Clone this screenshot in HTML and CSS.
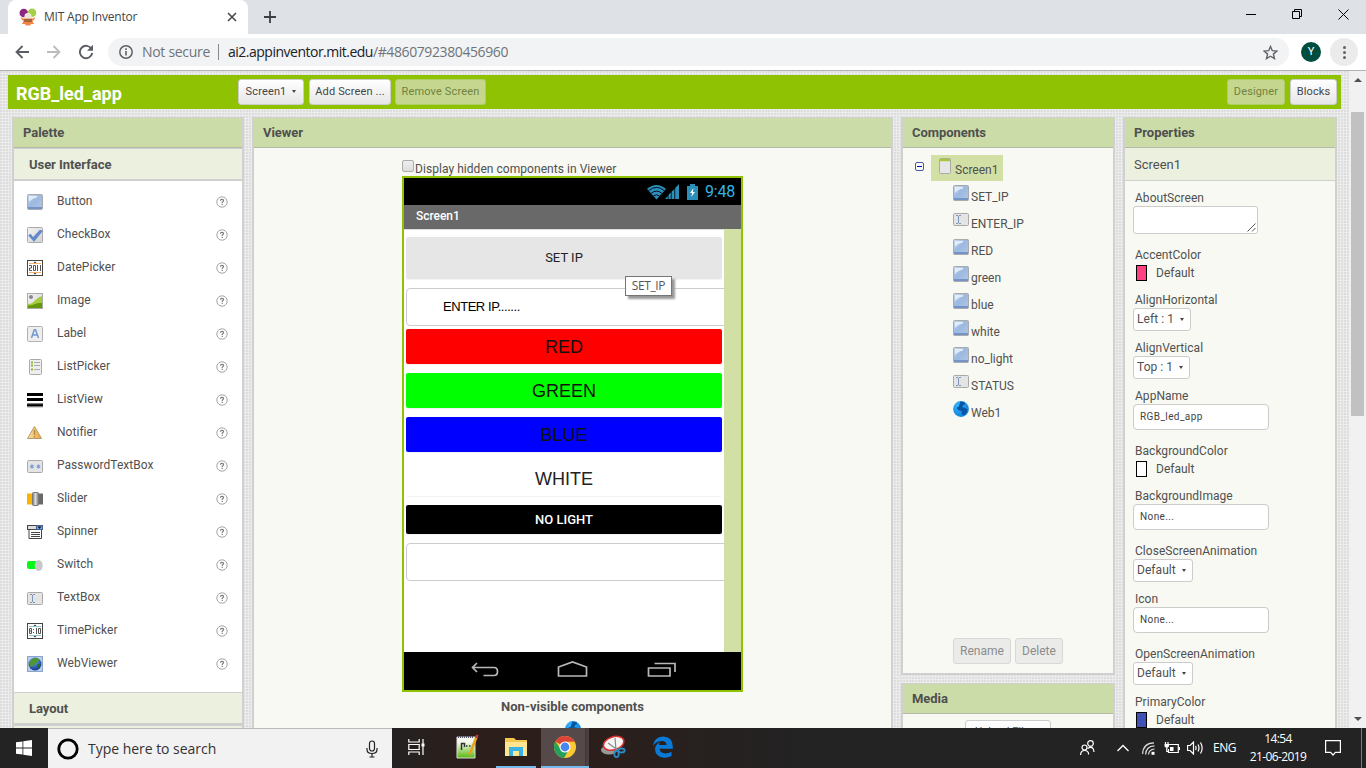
FILE: index.html
```html
<!DOCTYPE html>
<html lang="en">
<head>
<meta charset="utf-8">
<title>MIT App Inventor</title>
<link rel="stylesheet" href="styles.css">
</head>
<body>
<svg class="defs" width="0" height="0" aria-hidden="true">
  <defs>
    <linearGradient id="blueFill" x1="0" y1="0" x2="1" y2="1"><stop offset="0" stop-color="#c9dbf0"/><stop offset=".45" stop-color="#9db9e0"/><stop offset="1" stop-color="#b0c6e6"/></linearGradient>
    <linearGradient id="greyFill" x1="0" y1="0" x2="1" y2="1"><stop offset="0" stop-color="#f4f4f4"/><stop offset="1" stop-color="#d2d2d2"/></linearGradient>
    <linearGradient id="knob"><stop offset="0" stop-color="#777"/><stop offset=".5" stop-color="#ddd"/><stop offset="1" stop-color="#777"/></linearGradient>
    <linearGradient id="warn"><stop offset="0" stop-color="#fce3a8"/><stop offset="1" stop-color="#f0a030"/></linearGradient>
    <radialGradient id="globe" cx=".35" cy=".3" r=".8"><stop offset="0" stop-color="#35b6ff"/><stop offset="1" stop-color="#0879d8"/></radialGradient>
    <radialGradient id="earth" cx=".4" cy=".25" r=".8"><stop offset="0" stop-color="#7ab0ff"/><stop offset="1" stop-color="#0b2f86"/></radialGradient>
    <linearGradient id="page" x1="0" y1="0" x2="0" y2="1"><stop offset=".25" stop-color="#f5f8ee"/><stop offset="1" stop-color="#57b90c"/></linearGradient>
  </defs>
  <symbol id="i-button" viewBox="0 0 16 16"><rect x=".5" y=".5" width="15" height="15" rx="1" fill="url(#blueFill)" stroke="#aaa"/><path d="M2 2h8v1.500Q5 4 2 8z" fill="#e2ecf8"/><path d="M1 14h14" stroke="#7294c8" stroke-width="2"/></symbol>
  <symbol id="i-check" viewBox="0 0 16 16"><rect x=".5" y=".5" width="15" height="15" rx="1" fill="url(#greyFill)" stroke="#aaa"/><path d="M1.500 8.500l2-1.500 2.500 3.500L13 3l2.500 1L7 14.500z" fill="#6088cc" stroke="#4f76b8" stroke-width=".4"/></symbol>
  <symbol id="i-date" viewBox="0 0 16 16"><rect x=".5" y=".5" width="15" height="15" fill="#fff" stroke="#444"/><path d="M2 3.500h12M2 12.500h12" stroke="#f5b26b"/><path d="M6.500 3L8 1.500 9.500 3zM6.500 13L8 14.500 9.500 13z" fill="#333"/><path d="M2 5.500h2.500v2.500h-2v2.500H5M6.500 5.500h2v5h-2zM10.500 5v6M13.500 5v6" fill="none" stroke="#555"/></symbol>
  <symbol id="i-time" viewBox="0 0 16 16"><rect x=".5" y=".5" width="15" height="15" fill="#fff" stroke="#444"/><path d="M2 3.500h12M2 12.500h12" stroke="#8cc5d0"/><path d="M6.500 3L8 1.500 9.500 3zM6.500 13L8 14.500 9.500 13z" fill="#333"/><path d="M2.500 5.500h2v5h-2zM2.500 8h2M6.500 6v1M6.500 9v1M9.500 5v6M11.500 5.500h2v5h-2z" fill="none" stroke="#555"/></symbol>
  <symbol id="i-image" viewBox="0 0 16 16"><rect x=".5" y=".5" width="15" height="15" fill="url(#greyFill)" stroke="#aaa"/><circle cx="4" cy="4" r="2" fill="#888"/><path d="M1 11q4 0 7-3.500t7-4.500v12H1z" fill="#a6cb3c"/><path d="M1 12.500q4 0 7-1.500t7-1v5H1z" fill="#66960a"/></symbol>
  <symbol id="i-label" viewBox="0 0 16 16"><rect x=".5" y=".5" width="15" height="15" rx="1" fill="#eee" stroke="#b2b2b2"/><path d="M4.500 12L7.300 3.700h1.200L11.500 12M5.800 9h4.500" fill="none" stroke="#7397d1" stroke-width="1.500"/></symbol>
  <symbol id="i-listpicker" viewBox="0 0 16 16"><rect x="2.500" y=".5" width="12" height="15" rx="1" fill="#eee" stroke="#aaa"/><path d="M4 3.500h2M4 6.500h2M4 10.500h2" stroke="#8fb935" stroke-width="2"/><path d="M7 3.500h6M7 6.500h6M7 10.500h6" stroke="#aaa"/></symbol>
  <symbol id="i-listview" viewBox="0 0 16 16"><path d="M0 2.500h16M0 7.500h16M0 13h16" stroke="#000" stroke-width="3"/><path d="M0 12h16M0 15h16" stroke="#777" stroke-width=".6"/></symbol>
  <symbol id="i-notifier" viewBox="0 0 16 16"><path d="M7.500 1.500L14.500 13.500H.5z" fill="url(#warn)" stroke="#b39a70"/><path d="M7.500 5v5M7.500 11v1.500" stroke="#a58350" stroke-width="1.200"/></symbol>
  <symbol id="i-password" viewBox="0 0 16 16"><rect x=".5" y="2.500" width="15" height="12" rx="1" fill="#e4e4e4" stroke="#aaa"/><path d="M5 6.500v4M3.300 7.500l3.400 2M6.700 7.500l-3.400 2M11.500 6.500v4M9.800 7.500l3.400 2M13.200 7.500l-3.400 2" stroke="#7c9ed6" stroke-width="1.300"/></symbol>
  <symbol id="i-slider" viewBox="0 0 16 16"><path d="M0 2.500h6v11H0z" fill="#f8b400"/><path d="M11 2.500h5v11h-5z" fill="#6a6a6a"/><rect x="5.500" y="1.500" width="6" height="13" rx="1" fill="url(#knob)" stroke="#777"/></symbol>
  <symbol id="i-spinner" viewBox="0 0 16 16"><rect x=".5" y="1.500" width="15" height="4" fill="#ddd" stroke="#444"/><rect x="9.500" y="1.500" width="6" height="4" fill="#78a1df" stroke="#416194"/><path d="M10.500 2.500h4L12.500 5z" fill="#111"/><path d="M2 6v8.500h12.500V6M4 8.500h9M4 10.500h9M4 12.500h9" fill="none" stroke="#444"/></symbol>
  <symbol id="i-switch" viewBox="0 0 16 16"><rect x="0" y="4" width="13" height="8" rx="2" fill="#00fa16"/><ellipse cx="11.700" cy="8.500" rx="4" ry="5.500" fill="#c9c9c9"/></symbol>
  <symbol id="i-text" viewBox="0 0 16 16"><rect x=".5" y="2.500" width="15" height="12" rx="1" fill="#e4e4e4" stroke="#aaa"/><path d="M3 4.500h2M6 4.500h2M5.500 5v7M3 12.500h2M6 12.500h2" fill="none" stroke="#7c95b8"/></symbol>
  <symbol id="i-webviewer" viewBox="0 0 16 16"><rect x=".5" y=".5" width="15" height="15" fill="#b9cce8" stroke="#8aa6cc"/><circle cx="8" cy="8" r="6.500" fill="url(#earth)"/><path d="M3 6q1-4 6-4.300 3 1 3.500 3-2 0-3 2.300T6 9.500Q4 12 3 10z" fill="#4d9733"/><path d="M10 9q3-2 3.500 0-1 3-3 3z" fill="#256b23"/></symbol>
  <symbol id="i-web" viewBox="0 0 16 16"><circle cx="8" cy="8" r="7.900" fill="url(#globe)"/><path d="M7.500.5l4 .8.500 2-2 1-.5 2 2.500.5 2.500 2-1 3-2.500 2.500-2-1-.5-3.300L5 9 3.500 6.500 5.500 6z" fill="#0955a2"/></symbol>
  <symbol id="i-form" viewBox="0 0 12 16"><rect x=".5" y=".5" width="11" height="15" rx="1" fill="#e6e6e6" stroke="#aaa"/><path d="M1 2h10" stroke="#a4c639" stroke-width="2.500"/></symbol>
  <symbol id="i-help" viewBox="0 0 12 12"><circle cx="6" cy="6" r="5.200" fill="#fff" stroke="#9a9a9a" stroke-width=".9"/><path d="M4.400 4.700Q4.400 3.400 6 3.400t1.600 1.200Q7.600 5.400 6.200 6.300v.9M6.200 8v1" fill="none" stroke="#777" stroke-width="1.100"/></symbol>
</svg>

<div class="tabstrip">
  <div class="tab">
    <svg class="favicon" width="18" height="18" viewBox="0 0 18 18"><circle cx="4.800" cy="5" r="4.300" fill="#8d2583"/><circle cx="13" cy="4.800" r="4.300" fill="#a5cf47"/><path d="M5 10l1-4 3-1.500L12 6l1 4v2H5z" fill="#ece6da"/><path d="M1.500 9l3 1.500h9l3-1.500-1.500 3-1.500.5.500 2 1.500 1.500H12l-1 1.500H7L6 16H2.500L4 14.500l.5-2L3 12z" fill="#ef8743"/><path d="M5 11h8v3H5z" fill="#a8643a"/></svg>
    <span class="tab-title">MIT App Inventor</span>
    <svg width="10" height="10" viewBox="0 0 10 10"><path d="M1 1l8 8M9 1L1 9" stroke="#45494d" stroke-width="1.600"/></svg>
  </div>
  <svg class="newtab" width="12" height="12" viewBox="0 0 12 12"><path d="M6 0v12M0 6h12" stroke="#3c4043" stroke-width="1.800"/></svg>
  <div class="winbtns">
    <svg width="10" height="10" viewBox="0 0 10 10"><path d="M0 5.500h10" stroke="#000"/></svg>
    <svg width="10" height="10" viewBox="0 0 10 10"><path d="M.5 2.500h7v7h-7zM2.500 2.500v-2h7v7h-2" fill="none" stroke="#000"/></svg>
    <svg width="11" height="11" viewBox="0 0 11 11"><path d="M.5.5l10 10M10.500.5l-10 10" stroke="#000"/></svg>
  </div>
</div>
<div class="toolbar">
  <svg class="nav" width="14" height="14" viewBox="0 0 14 14"><path d="M14 7H1.500M7.500 1L1.500 7l6 6" fill="none" stroke="#5a5e63" stroke-width="1.800"/></svg>
  <svg class="nav" width="14" height="14" viewBox="0 0 14 14"><path d="M0 7h12.500M6.500 1l6 6-6 6" fill="none" stroke="#babcbe" stroke-width="1.800"/></svg>
  <svg class="nav" width="16" height="16" viewBox="0 0 16 16"><path d="M13.500 5A6.200 6.200 0 1 0 14.200 9" fill="none" stroke="#5a5e63" stroke-width="1.900"/><path d="M15 .8v6H9z" fill="#5a5e63"/></svg>
  <div class="omnibox">
    <svg width="14" height="14" viewBox="0 0 14 14"><circle cx="7" cy="7" r="6.200" fill="none" stroke="#5f6368" stroke-width="1.500"/><path d="M7 6v4.500M7 3.300v1.600" stroke="#5f6368" stroke-width="1.600"/></svg>
    <span class="insecure">Not secure</span><i class="sep"></i><span class="host">ai2.appinventor.mit.edu</span><span class="path">/#4860792380456960</span>
    <svg class="star" width="15" height="15" viewBox="0 0 15 15"><path d="M7.500 1.500l1.800 4.200 4.600.4-3.500 3 1.100 4.500-4-2.400-4 2.400 1.100-4.500-3.500-3 4.600-.4z" fill="none" stroke="#5f6368" stroke-width="1.400"/></svg>
  </div>
  <span class="avatar">Y</span>
  <span class="menu"><i></i><i></i><i></i></span>
</div>

<div class="viewport">
  <div class="app">
    <div class="project">
      <span class="project-name">RGB_led_app</span>
      <span class="btn w66">Screen1<i class="caret"></i></span>
      <span class="btn w82">Add Screen ...</span>
      <span class="btn w91 off">Remove Screen</span>
      <span class="btn w58 off push">Designer</span>
      <span class="btn w47">Blocks</span>
    </div>
    <div class="columns">
      <section class="box palette">
        <h2>Palette</h2>
        <h3>User Interface</h3>
        <ul class="items">
          <li><svg><use href="#i-button"/></svg><span>Button</span><svg class="help"><use href="#i-help"/></svg></li>
          <li><svg><use href="#i-check"/></svg><span>CheckBox</span><svg class="help"><use href="#i-help"/></svg></li>
          <li><svg><use href="#i-date"/></svg><span>DatePicker</span><svg class="help"><use href="#i-help"/></svg></li>
          <li><svg><use href="#i-image"/></svg><span>Image</span><svg class="help"><use href="#i-help"/></svg></li>
          <li><svg><use href="#i-label"/></svg><span>Label</span><svg class="help"><use href="#i-help"/></svg></li>
          <li><svg><use href="#i-listpicker"/></svg><span>ListPicker</span><svg class="help"><use href="#i-help"/></svg></li>
          <li><svg><use href="#i-listview"/></svg><span>ListView</span><svg class="help"><use href="#i-help"/></svg></li>
          <li><svg><use href="#i-notifier"/></svg><span>Notifier</span><svg class="help"><use href="#i-help"/></svg></li>
          <li><svg><use href="#i-password"/></svg><span>PasswordTextBox</span><svg class="help"><use href="#i-help"/></svg></li>
          <li><svg><use href="#i-slider"/></svg><span>Slider</span><svg class="help"><use href="#i-help"/></svg></li>
          <li><svg><use href="#i-spinner"/></svg><span>Spinner</span><svg class="help"><use href="#i-help"/></svg></li>
          <li><svg><use href="#i-switch"/></svg><span>Switch</span><svg class="help"><use href="#i-help"/></svg></li>
          <li><svg><use href="#i-text"/></svg><span>TextBox</span><svg class="help"><use href="#i-help"/></svg></li>
          <li><svg><use href="#i-time"/></svg><span>TimePicker</span><svg class="help"><use href="#i-help"/></svg></li>
          <li><svg><use href="#i-webviewer"/></svg><span>WebViewer</span><svg class="help"><use href="#i-help"/></svg></li>
        </ul>
        <h3>Layout</h3>
        <h3></h3>
      </section>

      <section class="box viewer">
        <h2>Viewer</h2>
        <div class="stage">
          <div class="hidden-opt"><i class="checkbox"></i><span>Display hidden components in Viewer</span></div>
          <div class="phone">
            <div class="status">
              <svg width="32" height="16" viewBox="0 0 32 16"><path d="M0 5Q9.500-3 19 5L9.500 15.500z" fill="#2b8fb8"/><path d="M1.500 6.800q8-6.800 16 0M4 9.400q5.500-4.600 11 0M6.300 12q3.200-2.500 6.400 0" fill="none" stroke="#001" stroke-width=".9"/><path d="M18 15h2.800v-3zM21.500 15h2.300V8.500l-2.300 2.300zM24.600 15h2.800V5l-2.800 2.800zM28.200 15H32V0l-3.800 4z" fill="#2b8fb8"/></svg>
              <svg width="11" height="16" viewBox="0 0 11 16"><path d="M0 2h3V0h5v2h3v14H0z" fill="#2b8fb8"/><path d="M6.500 4L3 9h2.200l-1 4L8 8H5.800z" fill="#fff"/></svg>
              <span>9:48</span>
            </div>
            <div class="titlebar">Screen1</div>
            <div class="screen">
              <div class="form">
                <div class="b set">SET IP</div>
                <div class="tb">ENTER IP.......</div>
                <div class="b big red">RED</div>
                <div class="b big green">GREEN</div>
                <div class="b big blue">BLUE</div>
                <div class="b big white">WHITE</div>
                <div class="b black">NO LIGHT</div>
                <div class="tb"></div>
              </div>
              <div class="tooltip">SET_IP</div>
            </div>
            <div class="navbar">
              <svg width="337" height="38" viewBox="0 0 337 38" fill="none" stroke="#b8b8b8" stroke-width="1.700"><path d="M73 11l-4.500 4.500L73 20M68.500 15.500H90q3.500 0 3.500 4t-3.500 4H79.500M154.500 24v-9l14-5 14 5v9zM244.500 16h21.500v8h-21.500zM250.500 11.500h20.500v8.500"/></svg>
            </div>
          </div>
          <div class="nonvis">Non-visible components</div>
          <svg class="bigglobe" width="16" height="16"><use href="#i-web"/></svg>
        </div>
      </section>

      <div class="stack">
        <section class="box components">
          <h2>Components</h2>
          <div class="tree">
            <div class="root"><i class="minus"></i><span class="sel"><svg width="12" height="16"><use href="#i-form"/></svg><span>Screen1</span></span></div>
            <div class="node"><svg><use href="#i-button"/></svg><span>SET_IP</span></div>
            <div class="node"><svg class="up1"><use href="#i-text"/></svg><span>ENTER_IP</span></div>
            <div class="node"><svg><use href="#i-button"/></svg><span>RED</span></div>
            <div class="node"><svg><use href="#i-button"/></svg><span>green</span></div>
            <div class="node"><svg><use href="#i-button"/></svg><span>blue</span></div>
            <div class="node"><svg><use href="#i-button"/></svg><span>white</span></div>
            <div class="node"><svg><use href="#i-button"/></svg><span>no_light</span></div>
            <div class="node"><svg class="up1"><use href="#i-text"/></svg><span>STATUS</span></div>
            <div class="node"><svg><use href="#i-web"/></svg><span>Web1</span></div>
          </div>
          <div class="actions"><span class="act w58">Rename</span><span class="act w48">Delete</span></div>
        </section>
        <section class="box media">
          <h2>Media</h2>
          <div class="upload">Upload File ...</div>
        </section>
      </div>

      <section class="box properties">
        <h2>Properties</h2>
        <div class="target">Screen1</div>
        <div class="props">
          <label>AboutScreen</label><div class="area"><svg width="9" height="9" viewBox="0 0 9 9"><path d="M.5 8.500l8-8M5 8.500l3.500-3.500" stroke="#444" stroke-width=".9"/></svg></div>
          <label>AccentColor</label><div class="color"><i class="pink"></i>Default</div>
          <label>AlignHorizontal</label><div class="select w58">Left : 1<i class="caret"></i></div>
          <label>AlignVertical</label><div class="select w57">Top : 1<i class="caret"></i></div>
          <label>AppName</label><div class="input">RGB_led_app</div>
          <label>BackgroundColor</label><div class="color"><i></i>Default</div>
          <label>BackgroundImage</label><div class="input">None...</div>
          <label>CloseScreenAnimation</label><div class="select w60">Default<i class="caret"></i></div>
          <label>Icon</label><div class="input">None...</div>
          <label>OpenScreenAnimation</label><div class="select w60">Default<i class="caret"></i></div>
          <label>PrimaryColor</label><div class="color"><i class="indigo"></i>Default</div>
        </div>
      </section>
    </div>
  </div>
  <div class="scrollbar"><i class="up"></i><i class="thumb"></i><i class="down"></i></div>
</div>

<div class="taskbar">
  <div class="start"><svg width="16" height="16" viewBox="0 0 16 16" fill="#fff"><path d="M0 2.300l6.500-.9v6.200H0zM7.300 1.300L16 0v7.600H7.300zM0 8.400h6.500v6.200L0 13.700zM7.300 8.400H16V16l-8.700-1.300z"/></svg></div>
  <div class="search">
    <svg width="22" height="22" viewBox="0 0 22 22"><circle cx="11" cy="11" r="9.200" fill="none" stroke="#000" stroke-width="2.800"/></svg>
    <span>Type here to search</span>
    <svg width="12" height="18" viewBox="0 0 12 18" fill="none" stroke="#222" stroke-width="1.200"><rect x="3.500" y="1" width="5" height="10" rx="2.500"/><path d="M1 8v1.500q0 4 5 4t5-4V8M6 13.500V17M3.500 17h5"/></svg>
  </div>
  <div class="tasks">
    <span class="task tv"><svg width="17" height="16" viewBox="0 0 17 16" fill="none" stroke="#fff" stroke-width="1.200"><path d="M.8 0v3h10.400V0M.8 16v-3h10.400v3M.8 5.500h10.400v5H.8zM15 0v16"/><path d="M13.500 4.500h3v3h-3z" fill="#fff" stroke="none"/></svg></span>
    <span class="task np"><svg width="24" height="26" viewBox="0 0 24 26"><path d="M2 3h18v21H2z" fill="url(#page)" stroke="#ddd"/><path d="M3 3h16" stroke="#556" stroke-width="2" stroke-dasharray="1 1"/><path d="M6.500 16V9.500h3V13M11 12h1.500M14 12h1.500" fill="none" stroke="#333" stroke-width="1.500"/><path d="M21.500 3L15.500 18l-1.500 2" stroke="#e6a51d" stroke-width="2.600" fill="none"/><path d="M21 4l1.500-3" stroke="#b5453c" stroke-width="2.600"/></svg></span>
    <span class="task open ex"><svg width="22" height="20" viewBox="0 0 22 20"><path d="M0 1h9l2 2h11v16H0z" fill="#f5c74d"/><path d="M0 5h22v14H0z" fill="#ffe592"/><path d="M4 10h14v9h-4v-5H8v5H4z" fill="#39b3e6"/></svg></span>
    <span class="task open active ch"><svg width="24" height="24" viewBox="0 0 24 24"><circle cx="12" cy="12" r="11" fill="#fcc934"/><path d="M12 12L2.500 6.500A11 11 0 0 1 21.600 6.800H12z" fill="#dc4437"/><path d="M2.500 6.500A11 11 0 0 0 11 23l5-8.500L7.500 14z" fill="#23a05b"/><circle cx="12" cy="12" r="5.500" fill="#fff"/><circle cx="12" cy="12" r="4.400" fill="#4a86ee"/></svg></span>
    <span class="task sn"><svg width="26" height="24" viewBox="0 0 26 24"><ellipse cx="9" cy="15" rx="8" ry="4.500" fill="#999"/><ellipse cx="13.500" cy="8.500" rx="10.500" ry="6.500" transform="rotate(-18 13 8)" fill="#f5f5f5" stroke="#d9322e" stroke-width="1.600"/><path d="M8 8l11 8M15 3l1 12" stroke="#888" stroke-width="1.200"/><g fill="none" stroke="#2c8ac0" stroke-width="1.800"><ellipse cx="16.500" cy="19" rx="2.200" ry="3.200"/><ellipse cx="21.500" cy="15.500" rx="3.200" ry="2"/></g></svg></span>
    <span class="task ed"><svg width="22" height="22" viewBox="0 0 22 22"><path d="M1 10Q2 1 11 .5q9.500 0 9.800 10v2.300H7.500q.5 4.500 6 4.700 3 0 6-1.800v4.300q-3 1.700-7 1.700Q3.500 21 3 13.500 3 8.500 8 6q-1 1.500-1 3h7.500q-.2-4-4.500-4Q4 5 1 10z" fill="#0a7ad8"/></svg></span>
  </div>
  <div class="tray">
    <svg width="15" height="16" viewBox="0 0 15 16" fill="none" stroke="#fff" stroke-width="1.200"><circle cx="4.500" cy="7.500" r="2.500"/><path d="M.6 15q0-4.500 4-4.500t4 4"/><circle cx="10.500" cy="3.500" r="2.800"/><path d="M7.500 8.500q6-3.500 6.500 3.500"/></svg>
    <svg class="chev" width="12" height="8" viewBox="0 0 12 8"><path d="M.5 7L6 1.500 11.500 7" fill="none" stroke="#fff" stroke-width="1.300"/></svg>
    <svg class="wifi" width="13" height="13" viewBox="0 0 13 13" fill="none" stroke="#ddd" stroke-width="1.200"><path d="M.6 12Q1 1 12 .8M3.600 12.500Q4 4 12.500 3.800M6.500 12.500q.5-5 6-5.500"/><path d="M9.500 12.800v-3h3v3z" fill="#fff" stroke="none"/></svg>
    <svg class="batt" width="16" height="12" viewBox="0 0 16 12" fill="none" stroke="#fff" stroke-width="1.200"><path d="M5 2.500h9.300v8H4.500V7"/><path d="M15.500 5v3M1.500 0v2M4 0v2M2.800 5v4.500h2"/><path d="M.5 2h4.500v2.500L3.800 5.500H1.700L.5 4.500zM6 5h3.500v4H6z" fill="#fff" stroke="none"/></svg>
    <svg class="vol" width="17" height="14" viewBox="0 0 17 14" fill="none" stroke="#fff" stroke-width="1.200"><path d="M.6 4.500h2.500L6.500 1v12L3.100 9.500H.6zM8.500 5q1.200 2 0 4M11 3.500q2 3.500 0 7M13.500 1.500q3.300 5.500 0 11"/></svg>
    <span class="lang">ENG</span>
    <span class="clock"><span>14:54</span><span>21-06-2019</span></span>
    <svg class="note" width="16" height="16" viewBox="0 0 16 16"><path d="M.6.6h14.800v11.800h-5L8 15l-2.400-2.600h-5z" fill="none" stroke="#fff" stroke-width="1.200"/></svg>
    <i class="peek"></i>
  </div>
</div>
</body>
</html>
```
FILE: styles.css
```css
* { box-sizing: border-box; }
body {
  margin: 0; width: 1366px; height: 768px; overflow: hidden;
  display: flex; flex-direction: column;
  font: 12px/16px Roboto, sans-serif; color: #505050; background: #fff;
}
svg { display: block; flex: none; }
.defs { position: absolute; }
h2, h3, ul { margin: 0; padding: 0; list-style: none; }

/* browser chrome */
.tabstrip { height: 34px; flex: none; background: #dee1e6; display: flex; align-items: center; padding-left: 8px; font-family: "Open Sans", sans-serif; }
.tab { width: 240px; height: 34px; background: #fff; border-radius: 8px 8px 0 0; display: flex; align-items: center; padding: 0 11px 0 11px; }
.tab-title { flex: 1; margin-left: 7px; letter-spacing: -.2px; color: #444; }
.newtab { margin-left: 16px; }
.winbtns { margin-left: auto; display: flex; align-items: center; gap: 36px; padding: 0 17px 6px 0; }
.toolbar { height: 37px; flex: none; display: flex; align-items: center; border-bottom: 1px solid #b3b3b3; padding: 0 8px 0 15px; font-family: "Open Sans", sans-serif; }
.nav { margin-right: 18px; }
.nav + .nav { margin-right: 17px; }
.nav + .nav + .nav { margin-right: 14px; }
.omnibox { width: 1182px; height: 28px; border-radius: 14px; background: #f1f3f4; display: flex; align-items: center; padding: 0 11px; font-size: 14px; line-height: 28px; color: #6f7479; }
.insecure { margin-left: 9px; letter-spacing: -.3px; }
.sep { width: 1px; height: 16px; background: #85898d; margin: 0 9px 0 8px; }
.host { color: #202124; letter-spacing: -.5px; }
.path { letter-spacing: -.4px; }
.star { margin-left: auto; }
.avatar { width: 20px; height: 20px; margin-left: 12px; border-radius: 50%; background: #004d40; color: #fff; font: 11px/20px Roboto, sans-serif; text-align: center; }
.menu { width: 28px; height: 28px; margin-left: 9px; border-radius: 50%; background: #ebebec; display: flex; flex-direction: column; align-items: center; justify-content: center; gap: 2px; }
.menu i { width: 3px; height: 3px; border-radius: 50%; background: #5f6368; }

/* page */
.viewport { height: 657px; flex: none; display: flex; overflow: hidden; }
.app {
  width: 1349px; padding: 4px 8px 0; background-color: #ececec;
  background-image: radial-gradient(circle at 1px 1px, #dcdcdc .7px, transparent 1px), radial-gradient(circle at 1px 1px, #d6d6d6 .7px, transparent 1px);
  background-size: 3px 3px, 6px 6px;
}
.project { height: 34px; background: #8fc202; display: flex; padding: 4px 4px 0 8px; }
.project-name { width: 222px; color: #fff; font-size: 18px; line-height: 30px; font-weight: 700; }
.btn { height: 26px; margin-right: 5px; border: 1px solid #ccc; border-radius: 3px; background: linear-gradient(#fff, #e6e6e6); color: #464646; font-size: 11px; line-height: 24px; letter-spacing: .15px; display: flex; justify-content: center; white-space: nowrap; }
.btn.w82 { margin-right: 4px; }
.btn:last-child { margin-right: 0; }
.btn.off { background: #c5d78f; border-color: #b0cc67; color: #71813f; }
.btn.push { margin-left: auto; }
.caret { width: 0; height: 0; border: 2.500px solid transparent; border-top: 3px solid #444; border-bottom: 0; align-self: center; margin-left: 6px; }
.btn .caret { margin-bottom: 2px; }
.w47 { width: 47px; } .w48 { width: 48px; } .w57 { width: 57px; } .w58 { width: 58px; } .w60 { width: 60px; } .w66 { width: 66px; } .w82 { width: 82px; } .w91 { width: 91px; }

.columns { display: flex; align-items: flex-start; gap: 8px; padding: 8px 0 0 4px; }
.box { border: 2px solid #d0d0d0; border-top-width: 1px; background: #f8f9f2; }
.box h2 { height: 30px; background: #ccdca9; border-bottom: 1px solid #b4b9aa; padding-left: 9px; font-size: 13px; line-height: 29px; font-weight: 700; letter-spacing: -.05px; color: #4f4f4f; }
.palette { width: 232px; height: 700px; }
.palette h3 { height: 33px; border: solid #cfcfcf; border-width: 1px 0 2px; background: #ecf0df; font-size: 13px; line-height: 31px; padding-left: 15px; font-weight: 700; letter-spacing: -.05px; }
.items { height: 511px; background: #fff; padding: 4px 14px 0 13px; }
.items li { height: 33px; display: flex; align-items: center; }
.items li svg { width: 16px; height: 16px; }
.items li span { flex: 1; margin: 0 0 2px 14px; letter-spacing: .04px; }
.items li .help { width: 12px; height: 12px; }

.viewer { width: 641px; height: 700px; }
.stage { padding: 10px 0 0 148px; }
.hidden-opt { height: 18px; display: flex; align-items: center; }
.checkbox { width: 12px; height: 12px; border: 1px solid #ababab; border-radius: 2px; background: linear-gradient(#eee, #ddd); margin: 0 1px 2px 0; }
.hidden-opt span { margin-top: 3px; letter-spacing: .05px; }
.phone { width: 341px; height: 516px; border: 2px solid #8fc202; background: #fff; }
.status { height: 27px; background: #000; color: #33b5e5; display: flex; align-items: center; justify-content: flex-end; padding-right: 6px; font-size: 16px; letter-spacing: -.2px; }
.status svg + svg { margin: 0 7px 0 8px; }
.titlebar { height: 24px; background: #696969; color: #fff; padding-left: 12px; line-height: 22px; font-weight: 500; letter-spacing: -.05px; }
.screen { position: relative; height: 423px; background: #d2dfa5; }
.form { width: 320px; height: 423px; background: #fff; border-top: 1px solid #ddd; padding: 7px 0 0 2px; overflow: hidden; }
.b { width: 316px; height: 35px; margin-bottom: 9px; border-radius: 2px; display: flex; align-items: center; justify-content: center; font-family: "Liberation Sans", sans-serif; color: #222; box-shadow: 0 1px 1px #f2f2f2; }
.big { font-size: 18px; color: #111; }
.set { height: 42px; background: #e6e6e6; font: 13px Roboto, sans-serif; padding-bottom: 2px; }
.red { background: #f00; } .green { background: #0f0; } .blue { background: #00f; }
.white { background: #fff; color: #222; }
.black { height: 29px; background: #000; color: #fff; font: 500 13px Roboto, sans-serif; padding-bottom: 1px; }
.tb { width: 340px; height: 38px; border: 1px solid #ccc; border-radius: 4px; margin-bottom: 3px; padding-left: 36px; font: 13px/36px "Liberation Sans", sans-serif; letter-spacing: -.45px; color: #000; }
.tooltip { position: absolute; left: 221px; top: 47px; width: 47px; height: 20px; border: 1px solid #767676; background: #fff; box-shadow: 3px 3px 2px #999; font: 12px/18px "Open Sans", sans-serif; letter-spacing: -.4px; text-align: center; color: #575757; }
.navbar { height: 38px; background: #000; }
.nonvis { width: 341px; height: 29px; text-align: center; font-size: 13px; line-height: 30px; font-weight: 700; }
.bigglobe { margin-left: 163px; }

.stack { display: flex; flex-direction: column; gap: 8px; }
.components { width: 214px; height: 558px; }
.tree { height: 490px; padding: 7px 0 0 12px; }
.root { height: 26px; display: flex; align-items: center; }
.minus { width: 9px; height: 9px; border: 1px solid #4a5aa6; border-radius: 2px; margin: 0 7px 3px 0; background: linear-gradient(#00c, #00c) center / 5px 1px no-repeat; }
.sel { width: 72px; height: 26px; background: #d2dfa5; display: flex; padding: 3px 0 0 8px; }
.sel span { margin: 4px 0 0 4px; }
.node { height: 27px; padding: 4px 0 0 38px; display: flex; }
.node svg { width: 16px; height: 16px; }
.node .up1 { margin-top: -1px; }
.node span { margin: 4px 0 0 2px; }
.actions { display: flex; gap: 4px; padding-left: 50px; }
.act { height: 26px; border: 1px solid #d8d8d8; border-radius: 3px; background: #ebebe9; color: #8c8c8c; line-height: 24px; text-align: center; }
.media { width: 214px; height: 100px; }
.upload { width: 86px; height: 26px; margin: 6px 0 0 62px; border: 1px solid #ccc; border-radius: 3px; background: linear-gradient(#fff, #eee); line-height: 22px; text-align: center; font-size: 11px; }

.properties { width: 214px; height: 700px; }
.target { height: 33px; background: #ecf0df; border-bottom: 1px solid #d0d0d0; padding-left: 9px; font-size: 13px; line-height: 34px; }
.props { padding: 9px 8px; display: flex; flex-direction: column; align-items: flex-start; }
.props label { height: 16px; padding-left: 2px; letter-spacing: .03px; }
.area { width: 125px; height: 28px; margin-bottom: 13px; border: 1px solid #ccc; border-radius: 3px; background: #fff; display: flex; align-items: flex-end; justify-content: flex-end; padding: 1px; }
.color { height: 20px; margin-bottom: 9px; padding-left: 3px; display: flex; align-items: center; }
.color i { width: 11px; height: 16px; border: 1px solid #000; background: #fff; margin-right: 9px; }
.color .pink { background: #ff4081; } .color .indigo { background: #3f51b5; }
.select { height: 23px; margin-bottom: 9px; border: 1px solid #ccc; border-radius: 3px; background: #fff; line-height: 20px; padding: 0 6px 0 3px; display: flex; letter-spacing: .05px; }
.select .caret { margin-left: auto; margin-bottom: 1px; }
.input { width: 136px; height: 26px; margin-bottom: 13px; border: 1px solid #ccc; border-radius: 4px; background: #fff; padding-left: 6px; font-size: 10px; line-height: 24px; letter-spacing: .4px; color: #444; }

.scrollbar { width: 17px; background: #f1f1f1; display: flex; flex-direction: column; align-items: center; padding: 7px 0 7px; }
.up { border: 4px solid transparent; border-top: 0; border-bottom: 4px solid #505050; }
.thumb { width: 13px; height: 304px; margin-top: 30px; background: #c1c1c1; }
.down { margin-top: auto; border: 4px solid transparent; border-bottom: 0; border-top: 4px solid #505050; }

/* taskbar */
.taskbar { height: 40px; flex: none; display: flex; background: linear-gradient(90deg, #232323 380px, #2b1d1a 470px, #2b1f1c 600px, #232323 800px); font-family: "Open Sans", sans-serif; }
.start { width: 48px; display: flex; align-items: center; justify-content: center; }
.search { width: 344px; background: #f2f2f2; border-top: 1px solid #bbb; display: flex; align-items: center; padding: 0 14px 0 9px; color: #333; font-size: 14px; }
.search span { flex: 1; margin: 0 0 0 9px; letter-spacing: -.03px; }
.tasks { display: flex; }
.task { width: 48px; display: flex; align-items: center; justify-content: center; border-bottom: 2px solid transparent; }
.open { border-bottom-color: #76b9ed; }
.task.np { padding-left: 5px; }
.task.ex { width: 40px; margin: 0 5px 0 8px; }
.task.ed { padding-left: 4px; }
.task.active { background: linear-gradient(90deg, #554a49 44px, #3a302f 44px, #4b403f 45px); }
.tray { margin-left: auto; display: flex; align-items: center; color: #fff; }
.chev { margin-left: 22px; }
.wifi { margin-left: 13px; }
.batt { margin-left: 9px; }
.vol { margin-left: 7px; }
.lang { margin-left: 9px; font-size: 12px; letter-spacing: -.5px; }
.clock { width: 70px; margin: 0 12px 0 7px; display: flex; flex-direction: column; font-size: 12px; line-height: 18px; text-align: center; letter-spacing: -.6px; white-space: nowrap; }
.peek { width: 1px; height: 40px; margin: 0 4px 0 20px; background: #777; }
```
